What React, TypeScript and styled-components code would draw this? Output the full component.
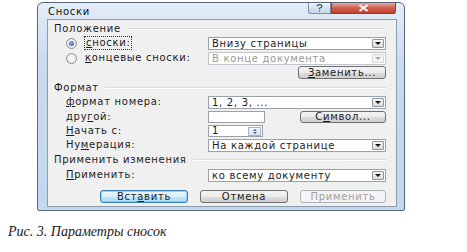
import React from "react";
import styled, { createGlobalStyle, css } from "styled-components";

const Global = createGlobalStyle`
  html, body { margin: 0; padding: 0; background: #fff; }
  * { box-sizing: border-box; }
`;

const Page = styled.div`
  width: 467px;
  height: 252px;
  background: #fff;
  padding-top: 2px;
  display: flex;
  flex-direction: column;
  font-family: "DejaVu Sans", sans-serif;
  font-size: 10px;
  letter-spacing: 0.7px;
  color: #1b1b1b;
`;

const Dialog = styled.div`
  margin-left: 37px;
  width: 368px;
  height: 209px;
  border: 1px solid #56657a;
  border-radius: 6px 6px 2px 2px;
  background: linear-gradient(#e4edf8, #c9daef 30%, #c5d7ee);
  padding: 0 7px 3px 9px;
  display: flex;
  flex-direction: column;
`;

const TitleBar = styled.div`
  height: 16px;
  display: flex;
  align-items: flex-start;
`;

const TitleText = styled.div`
  padding-top: 3px;
  line-height: 12px;
  margin-left: 1px;
  color: #111;
`;

const WinButtons = styled.div`
  margin-left: auto;
  margin-right: 1px;
  display: flex;
`;

const WinBtn = styled.div<{ $close?: boolean }>`
  height: 11px;
  width: ${(p) => (p.$close ? 65 : 23)}px;
  border: 1px solid ${(p) => (p.$close ? "#8c3a33" : "#7c8ea6")};
  border-top: none;
  border-radius: ${(p) => (p.$close ? "0 0 3px 0" : "0 0 0 3px")};
  background: ${(p) =>
    p.$close
      ? "linear-gradient(#e9a99f, #d0604f 50%, #c2402c)"
      : "linear-gradient(#f4f8fc, #d7e2ef 50%, #c6d5e7)"};
  display: flex;
  align-items: center;
  justify-content: center;
`;

const Content = styled.div`
  flex: 1;
  background: #f0f0f0;
  border: 1px solid #8d9bae;
  padding: 3px 10px 0 6px;
  display: flex;
  flex-direction: column;
`;

const Heading = styled.div<{ $top?: number }>`
  height: 12px;
  margin-top: ${(p) => p.$top ?? 0}px;
  display: flex;
  align-items: center;
  gap: 6px;
  line-height: 12px;
  &::after {
    content: "";
    flex: 1;
    border-top: 1px solid #d8dde2;
    border-bottom: 1px solid #ffffff;
  }
`;

const Row = styled.div<{ $top?: number }>`
  height: 14px;
  margin-top: ${(p) => p.$top ?? 0}px;
  display: flex;
  align-items: center;
`;

const LabelCell = styled.div<{ $indent?: number }>`
  width: 154px;
  flex: none;
  padding-left: ${(p) => p.$indent ?? 12}px;
  display: flex;
  align-items: center;
  line-height: 12px;
  white-space: nowrap;
`;

const Radio = styled.span<{ $checked?: boolean }>`
  width: 11px;
  height: 11px;
  border-radius: 50%;
  border: 1px solid #8a8f96;
  background: radial-gradient(circle, #ffffff, #dcdfe3);
  margin-right: 8px;
  display: inline-flex;
  align-items: center;
  justify-content: center;
  ${(p) =>
    p.$checked &&
    css`
      &::after {
        content: "";
        width: 5px;
        height: 5px;
        border-radius: 50%;
        background: radial-gradient(circle at 40% 40%, #8fb5e2, #1c4f8f);
      }
    `}
`;

const Focus = styled.span`
  outline: 1px dotted #333;
  outline-offset: 0px;
  padding: 0 1px;
`;

const U = styled.span`
  text-decoration: underline;
  text-underline-offset: 1px;
`;

const Select = styled.div<{ $disabled?: boolean }>`
  flex: 1;
  height: 13px;
  background: #fff;
  border: 1px solid ${(p) => (p.$disabled ? "#c2c6cb" : "#9aa1a9")};
  color: ${(p) => (p.$disabled ? "#9a9a9a" : "#1b1b1b")};
  display: flex;
  align-items: center;
  padding-left: 3px;
  line-height: 11px;
  white-space: nowrap;
`;

const DropBtn = styled.span<{ $disabled?: boolean }>`
  margin-left: auto;
  margin-right: 1px;
  width: 12px;
  height: 9px;
  border: 1px solid ${(p) => (p.$disabled ? "#d4d7da" : "#8e969f")};
  border-radius: 1px;
  background: ${(p) => (p.$disabled ? "#f4f4f4" : "linear-gradient(#f6f6f6, #dadada)")};
  display: flex;
  align-items: center;
  justify-content: center;
  &::after {
    content: "";
    border-left: 3px solid transparent;
    border-right: 3px solid transparent;
    border-top: 3px solid ${(p) => (p.$disabled ? "#a8a8a8" : "#111")};
  }
`;

const Input = styled.div<{ $width: number }>`
  width: ${(p) => p.$width}px;
  height: 12px;
  background: #fff;
  border: 1px solid #9aa1a9;
  display: flex;
  align-items: center;
  padding-left: 3px;
  line-height: 10px;
`;

const Spin = styled.span`
  margin-left: auto;
  margin-right: 1px;
  width: 13px;
  height: 9px;
  border: 1px solid #a3b4c8;
  background: linear-gradient(#f4f7fb, #dde6f1);
  display: flex;
  flex-direction: column;
  align-items: center;
  justify-content: space-evenly;
`;

const Arrow = styled.span<{ $up?: boolean }>`
  border-left: 2px solid transparent;
  border-right: 2px solid transparent;
  ${(p) =>
    p.$up ? "border-bottom: 2px solid #3b5f8a;" : "border-top: 2px solid #3b5f8a;"}
`;

const ButtonRow = styled.div<{ $top?: number; $gap?: number }>`
  margin-top: ${(p) => p.$top ?? 0}px;
  display: flex;
  justify-content: flex-end;
  align-items: center;
  gap: ${(p) => p.$gap ?? 12}px;
`;

const Button = styled.div<{ $width: number; $default?: boolean; $disabled?: boolean; $h?: number }>`
  width: ${(p) => p.$width}px;
  height: ${(p) => p.$h ?? 13}px;
  border-radius: 3px;
  border: 1px solid #707070;
  background: linear-gradient(#f3f3f3, #ebebeb 50%, #dddddd 51%, #cfcfcf);
  display: flex;
  align-items: center;
  justify-content: center;
  line-height: 10px;
  color: #1b1b1b;
  ${(p) =>
    p.$default &&
    css`
      border-color: #3c7fb1;
      box-shadow: inset 0 0 0 1px #8ed0f2;
      background: linear-gradient(#eaf6fd, #d9f0fc 50%, #bee6fd 51%, #a7d9f5);
    `}
  ${(p) =>
    p.$disabled &&
    css`
      border-color: #adb2b5;
      background: #f4f4f4;
      color: #a0a0a0;
    `}
`;

const SpacerLabel = styled.div`
  width: 154px;
  flex: none;
`;

const Caption = styled.div`
  margin-left: 8px;
  margin-top: 13px;
  font-family: "Liberation Serif", serif;
  font-style: italic;
  font-size: 14px;
  letter-spacing: 0;
  line-height: 16px;
  color: #1a1a1a;
`;

export default function App() {
  return (
    <>
      <Global />
      <Page>
        <Dialog>
          <TitleBar>
            <TitleText>Сноски</TitleText>
            <WinButtons>
              <WinBtn>
                <svg width="7" height="8" viewBox="0 0 7 8">
                  <path
                    d="M1 2.2 Q1 0.6 3.5 0.6 Q6 0.6 6 2.2 Q6 3.4 3.5 4.2 L3.5 5.3 M3.5 6.4 L3.5 7.4"
                    fill="none"
                    stroke="#3a4a5e"
                    strokeWidth="1.1"
                  />
                </svg>
              </WinBtn>
              <WinBtn $close>
                <svg width="11" height="8" viewBox="0 0 11 8">
                  <path d="M1.5 1 L9.5 7 M9.5 1 L1.5 7" stroke="#fff" strokeWidth="1.8" />
                </svg>
              </WinBtn>
            </WinButtons>
          </TitleBar>
          <Content>
            <Heading>Положение</Heading>
            <Row $top={1}>
              <LabelCell $indent={12}>
                <Radio $checked />
                <Focus>
                  <U>с</U>носки:
                </Focus>
              </LabelCell>
              <Select>
                Внизу страницы
                <DropBtn />
              </Select>
            </Row>
            <Row $top={1}>
              <LabelCell $indent={12}>
                <Radio />
                <span>
                  <U>к</U>онцевые сноски:
                </span>
              </LabelCell>
              <Select $disabled>
                В конце документа
                <DropBtn $disabled />
              </Select>
            </Row>
            <ButtonRow $top={1}>
              <Button $width={88}>
                <U>З</U>аменить...
              </Button>
            </ButtonRow>
            <Heading $top={3}>Формат</Heading>
            <Row $top={1}>
              <LabelCell>
                <U>ф</U>ормат номера:
              </LabelCell>
              <Select>
                1, 2, 3, ...
                <DropBtn />
              </Select>
            </Row>
            <Row $top={1}>
              <LabelCell>
                дру<U>г</U>ой:
              </LabelCell>
              <Input $width={57} />
              <ButtonRow style={{ flex: 1 }}>
                <Button $width={86} $h={12}>
                  С<U>и</U>мвол...
                </Button>
              </ButtonRow>
            </Row>
            <Row>
              <LabelCell>
                <U>Н</U>ачать с:
              </LabelCell>
              <Input $width={55}>
                1
                <Spin>
                  <Arrow $up />
                  <Arrow />
                </Spin>
              </Input>
            </Row>
            <Row>
              <LabelCell>
                Ну<U>м</U>ерация:
              </LabelCell>
              <Select>
                На каждой странице
                <DropBtn />
              </Select>
            </Row>
            <Heading $top={2}>Применить изменения</Heading>
            <Row $top={2}>
              <LabelCell>
                <U>П</U>рименить:
              </LabelCell>
              <Select>
                ко всему документу
                <DropBtn />
              </Select>
            </Row>
            <ButtonRow $top={8}>
              <Button $width={88} $default>
                Вст<U>а</U>вить
              </Button>
              <Button $width={88}>Отмена</Button>
              <Button $width={86} $disabled>
                Применить
              </Button>
            </ButtonRow>
          </Content>
        </Dialog>
        <Caption>Рис. 3. Параметры сносок</Caption>
      </Page>
    </>
  );
}
